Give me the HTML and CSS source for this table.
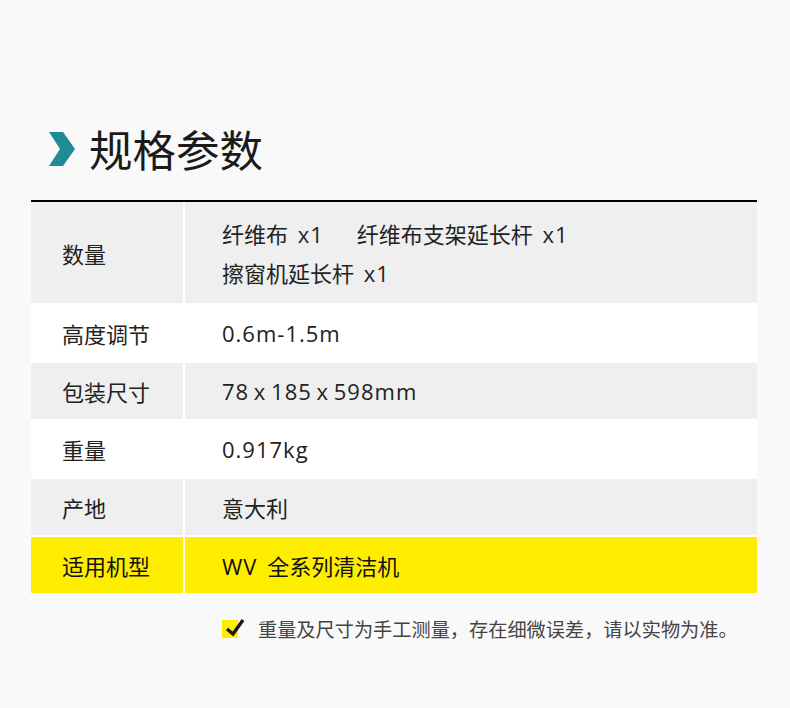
FILE: index.html
```html
<!DOCTYPE html>
<html lang="zh">
<head>
<meta charset="utf-8">
<title>规格参数</title>
<link rel="stylesheet" href="styles.css">
</head>
<body>
<div class="page">
  <div class="title-row">
    <svg class="chev" width="27" height="34" viewBox="0 0 27 34"><polygon points="0,0 14,0 26,17 14,34 0,34 11,17" fill="#1f8b95"/></svg>
    <h1 class="title">规格参数</h1>
  </div>
  <div class="spec">
    <div class="row gray tall">
      <div class="key">数量</div>
      <div class="val">
        <div class="line"><span class="item">纤维布<span class="en ws"> x1</span></span><span>纤维布支架延长杆<span class="en ws"> x1</span></span></div>
        <div class="line">擦窗机延长杆<span class="en ws"> x1</span></div>
      </div>
    </div>
    <div class="row white">
      <div class="key">高度调节</div>
      <div class="val"><span class="en">0.6m-1.5m</span></div>
    </div>
    <div class="row gray">
      <div class="key">包装尺寸</div>
      <div class="val"><span class="en">78 x 185 x 598mm</span></div>
    </div>
    <div class="row white">
      <div class="key">重量</div>
      <div class="val"><span class="en">0.917kg</span></div>
    </div>
    <div class="row gray">
      <div class="key">产地</div>
      <div class="val">意大利</div>
    </div>
    <div class="row yellow">
      <div class="key">适用机型</div>
      <div class="val"><span><span class="en ws">WV </span>全系列清洁机</span></div>
    </div>
  </div>
  <div class="note">
    <svg class="check" width="24" height="21" viewBox="0 0 24 21"><rect x="0" y="3" width="16" height="18" fill="#ffed00"/><polyline points="5,12 11,17 21,3" fill="none" stroke="#1a1a1a" stroke-width="3.4"/></svg>
    <span class="note-text">重量及尺寸为手工测量，存在细微误差，请以实物为准。</span>
  </div>
</div>
</body>
</html>
```

FILE: styles.css
```css
html, body {
  margin: 0;
  padding: 0;
  background: #f9f9f9;
}
body {
  font-family: "Noto Sans CJK SC", "Noto Sans", sans-serif;
  color: #222;
  width: 790px;
  height: 708px;
  overflow: hidden;
}
.page {
  padding: 120px 33px 0 31px;
}
.title-row {
  display: flex;
  align-items: center;
  height: 58px;
  padding-left: 18px;
}
.chev {
  display: block;
  margin-right: 13px;
}
.title {
  margin: 0;
  font-size: 43.5px;
  font-weight: 400;
  line-height: 58px;
  color: #1a1a1a;
}
.spec {
  margin-top: 22px;
  border-top: 2px solid #000;
  background: #fff;
  display: flex;
  flex-direction: column;
  gap: 2px;
}
.row {
  display: grid;
  grid-template-columns: 152px 1fr;
  column-gap: 2px;
  height: 56px;
  font-size: 22px;
}
.row.tall {
  height: 101px;
}
.row.gray .key, .row.gray .val { background: #efefef; }
.row.white .key, .row.white .val { background: #fff; }
.row.yellow .key, .row.yellow .val { background: #ffed00; color: #111; }
.key {
  display: flex;
  align-items: center;
  padding-left: 31px;
}
.val {
  display: flex;
  flex-direction: column;
  justify-content: center;
  padding-left: 37px;
}
.en {
  font-family: "Open Sans", "Noto Sans", sans-serif;
  font-size: 22px;
  letter-spacing: 1px;
  word-spacing: -2px;
}
.en.ws {
  word-spacing: 3px;
}
.line {
  line-height: 38px;
}
.item {
  margin-right: 33px;
}
.note {
  display: flex;
  align-items: center;
  margin-top: 24px;
  padding-left: 191px;
  height: 24px;
}
.check {
  display: block;
  margin-right: 12px;
  margin-top: -4px;
}
.note-text {
  font-size: 19.2px;
  color: #444;
}
```
